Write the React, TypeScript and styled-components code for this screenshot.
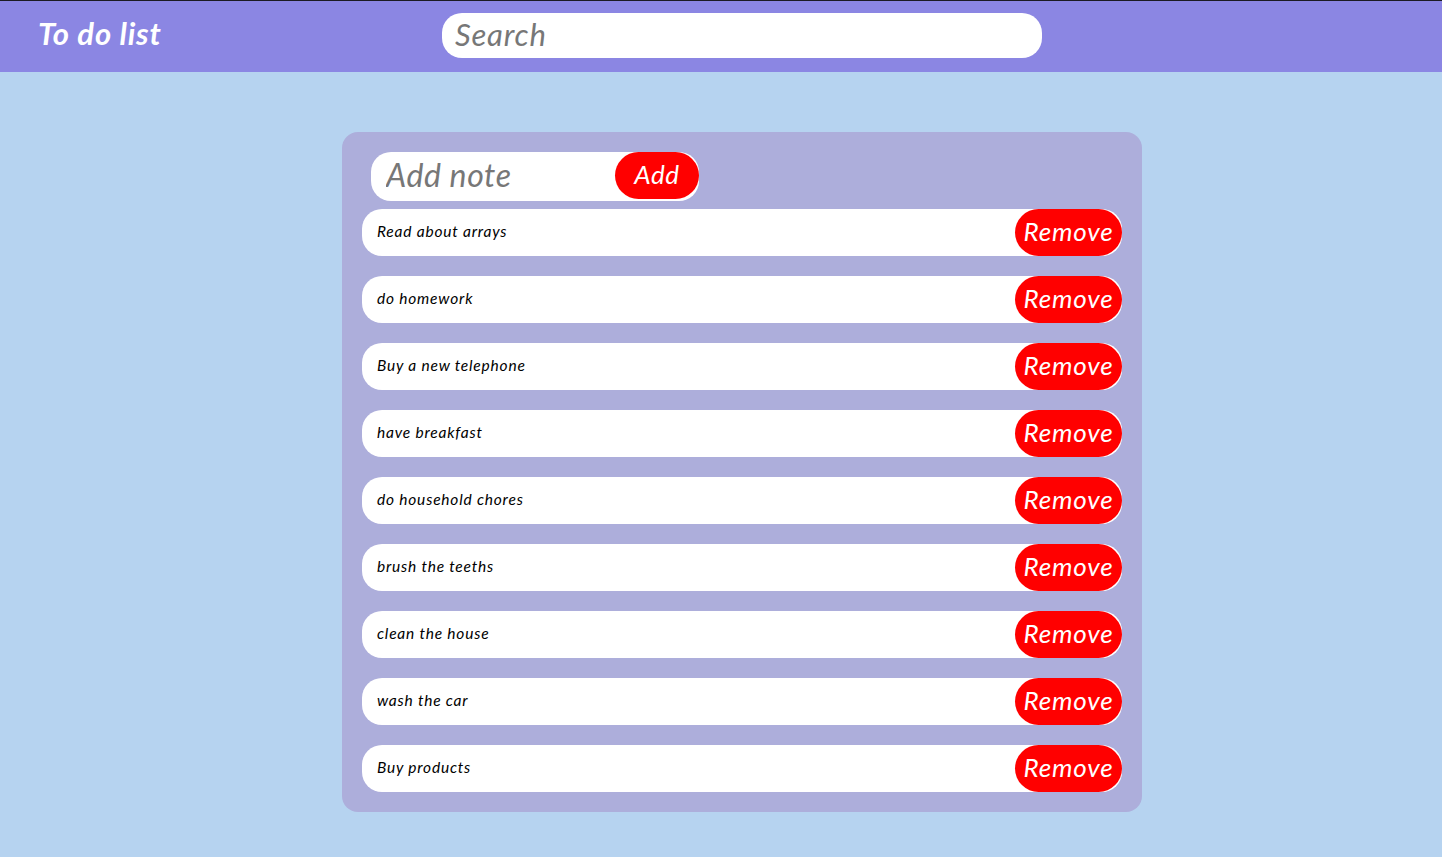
import React, { useState } from "react";
import styled, { createGlobalStyle } from "styled-components";

const GlobalStyle = createGlobalStyle`
  html, body {
    margin: 0;
    padding: 0;
    background: #b6d3f0;
    font-family: "Lato", "Open Sans", sans-serif;
    font-style: italic;
  }
  * {
    box-sizing: border-box;
  }
`;

const Header = styled.header`
  display: flex;
  align-items: flex-start;
  height: 72px;
  border-top: 1px solid #1c1b24;
  background: #8b86e3;
  padding: 12px 0 0 38px;
`;

const Title = styled.h1`
  margin: 0;
  width: 404px;
  color: #fff;
  font-size: 31px;
  line-height: 40px;
  font-weight: 700;
  letter-spacing: 0.8px;
`;

const SearchInput = styled.input`
  width: 600px;
  height: 45px;
  border: none;
  border-radius: 20px;
  padding: 0 13px 4px;
  font-family: inherit;
  font-style: italic;
  font-size: 31px;
  letter-spacing: 0.8px;
  outline: none;
  &::placeholder {
    color: #777;
  }
`;

const Main = styled.main`
  display: flex;
  justify-content: center;
  padding: 60px 0 45px 42px;
`;

const Card = styled.section`
  width: 800px;
  background: #adaedb;
  border-radius: 16px;
  padding: 20px;
  display: flex;
  flex-direction: column;
`;

const AddForm = styled.form`
  display: flex;
  align-items: flex-start;
  width: 328px;
  height: 49px;
  margin-left: 9px;
  margin-bottom: 8px;
  background: #fff;
  border-radius: 20px;
`;

const NoteInput = styled.input`
  flex: 1;
  min-width: 0;
  height: 47px;
  border: none;
  background: transparent;
  padding: 0 15px 3px;
  font-family: inherit;
  font-style: italic;
  font-size: 32px;
  letter-spacing: 0.6px;
  outline: none;
  &::placeholder {
    color: #777;
  }
`;

const RedButton = styled.button<{ $wide?: boolean }>`
  height: 47px;
  width: ${(p) => (p.$wide ? "107px" : "84px")};
  border: none;
  border-radius: 24px;
  background: #ff0000;
  color: #fff;
  font-family: inherit;
  font-style: italic;
  font-size: 26px;
  letter-spacing: ${(p) => (p.$wide ? "0.8px" : "0.6px")};
  cursor: pointer;
  padding: 0 0 4px;
`;

const List = styled.ul`
  list-style: none;
  margin: 0;
  padding: 0;
  display: flex;
  flex-direction: column;
  gap: 20px;
`;

const Item = styled.li`
  display: flex;
  align-items: center;
  justify-content: space-between;
  height: 47px;
  background: #fff;
  border-radius: 20px;
  padding-left: 15px;
`;

const ItemText = styled.span`
  font-size: 15.5px;
  font-weight: 400;
  color: #000;
  letter-spacing: 0.8px;
  margin-top: -4px;
`;

const initial = [
  "Read about arrays",
  "do homework",
  "Buy a new telephone",
  "have breakfast",
  "do household chores",
  "brush the teeths",
  "clean the house",
  "wash the car",
  "Buy products",
];

export default function App() {
  const [notes, setNotes] = useState(initial);
  const [draft, setDraft] = useState("");
  const [query, setQuery] = useState("");

  const add = (e: React.FormEvent) => {
    e.preventDefault();
    if (!draft.trim()) return;
    setNotes([...notes, draft.trim()]);
    setDraft("");
  };

  const shown = notes.filter((n) =>
    n.toLowerCase().includes(query.toLowerCase())
  );

  return (
    <>
      <GlobalStyle />
      <Header>
        <Title>To do list</Title>
        <SearchInput
          placeholder="Search"
          value={query}
          onChange={(e) => setQuery(e.target.value)}
        />
      </Header>
      <Main>
        <Card>
          <AddForm onSubmit={add}>
            <NoteInput
              placeholder="Add note"
              value={draft}
              onChange={(e) => setDraft(e.target.value)}
            />
            <RedButton type="submit">Add</RedButton>
          </AddForm>
          <List>
            {shown.map((note, i) => (
              <Item key={note + i}>
                <ItemText>{note}</ItemText>
                <RedButton
                  $wide
                  type="button"
                  onClick={() => setNotes(notes.filter((n) => n !== note))}
                >
                  Remove
                </RedButton>
              </Item>
            ))}
          </List>
        </Card>
      </Main>
    </>
  );
}
